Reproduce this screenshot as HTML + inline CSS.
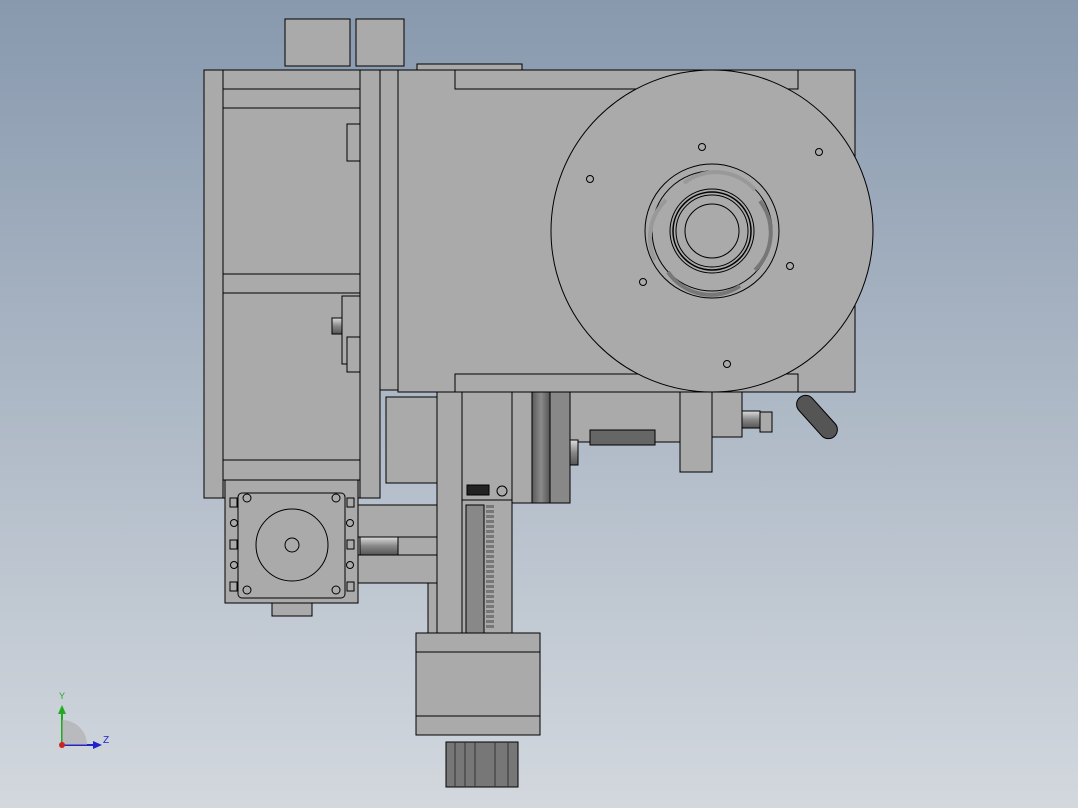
<!DOCTYPE html><html><head><style>body{margin:0}svg{display:block}</style></head><body>
<svg width="1078" height="808" viewBox="0 0 1078 808" xmlns="http://www.w3.org/2000/svg">
<defs>
<linearGradient id="bg" x1="0" y1="0" x2="0" y2="1"><stop offset="0" stop-color="#8899ae"/><stop offset="1" stop-color="#d3d8de"/></linearGradient>
<linearGradient id="dk" x1="0" y1="0" x2="1" y2="0"><stop offset="0" stop-color="#5a5a5a"/><stop offset=".5" stop-color="#8a8a8a"/><stop offset="1" stop-color="#555"/></linearGradient>
<linearGradient id="cy" x1="0" y1="0" x2="0" y2="1"><stop offset="0" stop-color="#ddd"/><stop offset=".5" stop-color="#888"/><stop offset="1" stop-color="#555"/></linearGradient>
</defs>
<rect width="1078" height="808" fill="url(#bg)"/>
<g fill="#aaa" stroke="#000" stroke-width="1">
<rect x="285" y="19" width="65" height="47"/><rect x="356" y="19" width="48" height="47"/>
<rect x="417" y="64" width="105" height="6"/>
<rect x="204" y="70" width="156" height="428"/>
<line x1="223" y1="70" x2="223" y2="498"/>
<line x1="223" y1="89" x2="360" y2="89"/><line x1="223" y1="108" x2="360" y2="108"/>
<line x1="223" y1="274" x2="360" y2="274"/><line x1="223" y1="293" x2="360" y2="293"/>
<rect x="223" y="460" width="137" height="20"/>
<rect x="347" y="124" width="13" height="37"/><rect x="342" y="296" width="18" height="68"/><rect x="332" y="318" width="10" height="16" fill="url(#cy)"/><rect x="347" y="337" width="13" height="35"/>
<rect x="360" y="70" width="20" height="428"/><rect x="380" y="70" width="18" height="320"/>
<rect x="398" y="70" width="457" height="322"/>
<rect x="455" y="70" width="343" height="19"/><rect x="455" y="374" width="343" height="18"/>
<circle cx="712" cy="231" r="161"/>
<circle cx="712" cy="231" r="67" fill="none"/><circle cx="712" cy="231" r="60" fill="none"/>
<circle cx="712" cy="231" r="42" fill="none"/><circle cx="712" cy="231" r="39" fill="none" stroke-width="1.5"/><circle cx="712" cy="231" r="36" fill="none"/>
<circle cx="712" cy="231" r="27" fill="none"/>
<g fill="none"><circle cx="702" cy="147" r="3.5"/><circle cx="819" cy="152" r="3.5"/><circle cx="590" cy="179" r="3.5"/><circle cx="790" cy="266" r="3.5"/><circle cx="643" cy="282" r="3.5"/><circle cx="727" cy="364" r="3.5"/></g>
<path d="M668 272 A52 52 0 0 0 740 286" stroke="#777" stroke-width="4" fill="none"/>
<path d="M760 201 A52 52 0 0 1 755 270" stroke="#777" stroke-width="4" fill="none"/>
<path d="M655 260 A52 52 0 0 1 666 200" stroke="#999" stroke-width="4" fill="none"/>
<path d="M684 183 A52 52 0 0 1 755 190" stroke="#999" stroke-width="4" fill="none"/>
<rect x="386" y="397" width="51" height="86"/>
<rect x="358" y="505" width="79" height="78"/><line x1="358" y1="537" x2="437" y2="537"/><line x1="358" y1="555" x2="437" y2="555"/><rect x="360" y="537" width="38" height="18" fill="url(#cy)"/>
<rect x="428" y="583" width="9" height="50"/>
<rect x="437" y="392" width="25" height="242"/>
<rect x="462" y="392" width="50" height="242"/><rect x="462" y="392" width="50" height="108"/>
<rect x="467" y="485" width="22" height="10" fill="#222"/><circle cx="502" cy="491" r="5" fill="none"/>
<rect x="466" y="505" width="18" height="128" fill="#888"/>
<g stroke="#555" stroke-width="2"><path d="M490 505 V630" stroke-dasharray="3 2" stroke-width="8" stroke="#777"/></g>
<rect x="512" y="392" width="20" height="111"/>
<rect x="532" y="392" width="18" height="111" fill="url(#dk)"/><rect x="550" y="392" width="20" height="111" fill="#888"/>
<rect x="570" y="392" width="110" height="50"/><rect x="590" y="430" width="65" height="15" fill="#666"/>
<rect x="680" y="392" width="32" height="80"/><rect x="712" y="392" width="30" height="45"/>
<rect x="742" y="411" width="18" height="17" fill="url(#cy)"/><rect x="760" y="412" width="12" height="20"/>
<rect x="570" y="440" width="8" height="25" fill="url(#cy)"/>
<rect x="791" y="408" width="52" height="18" rx="9" fill="#555" transform="rotate(48 817 417)"/>
<rect x="225" y="480" width="133" height="123"/><rect x="272" y="603" width="40" height="13"/>
<rect x="238" y="493" width="107" height="105" rx="4" fill="none"/>
<circle cx="292" cy="545" r="36" fill="none"/><circle cx="292" cy="545" r="7" fill="none"/>
<g fill="none"><circle cx="247" cy="498" r="4"/><circle cx="336" cy="498" r="4"/><circle cx="247" cy="590" r="4"/><circle cx="336" cy="590" r="4"/>
<rect x="230" y="498" width="7" height="9"/><rect x="347" y="498" width="7" height="9"/><rect x="230" y="540" width="7" height="9"/><rect x="347" y="540" width="7" height="9"/><rect x="230" y="582" width="7" height="9"/><rect x="347" y="582" width="7" height="9"/>
<circle cx="234" cy="523" r="3.5"/><circle cx="350" cy="523" r="3.5"/><circle cx="234" cy="565" r="3.5"/><circle cx="350" cy="565" r="3.5"/></g>
<rect x="416" y="633" width="124" height="102"/><line x1="416" y1="652" x2="540" y2="652"/><line x1="416" y1="716" x2="540" y2="716"/>
<rect x="446" y="742" width="72" height="45" fill="#777"/>
<g stroke="#333"><line x1="455" y1="742" x2="455" y2="787"/><line x1="465" y1="742" x2="465" y2="787"/><line x1="475" y1="742" x2="475" y2="787"/><line x1="495" y1="742" x2="495" y2="787"/><line x1="508" y1="742" x2="508" y2="787"/></g>
</g>
<g font-family="Liberation Sans, sans-serif" font-size="10">
<line x1="62" y1="745" x2="62" y2="712" stroke="#2a2" stroke-width="2"/><path d="M58 714 L62 705 L66 714Z" fill="#2a2"/>
<line x1="62" y1="745" x2="95" y2="745" stroke="#22c" stroke-width="2"/><path d="M93 741 L102 745 L93 749Z" fill="#22c"/>
<path d="M62 745 V720 A25 25 0 0 1 87 745Z" fill="#aaa" opacity=".6"/>
<circle cx="62" cy="745" r="3" fill="#c22"/>
<text x="59" y="699" fill="#2a2" font-size="9">Y</text><text x="103" y="743" fill="#22c">Z</text>
</g>
</svg>
</body></html>
